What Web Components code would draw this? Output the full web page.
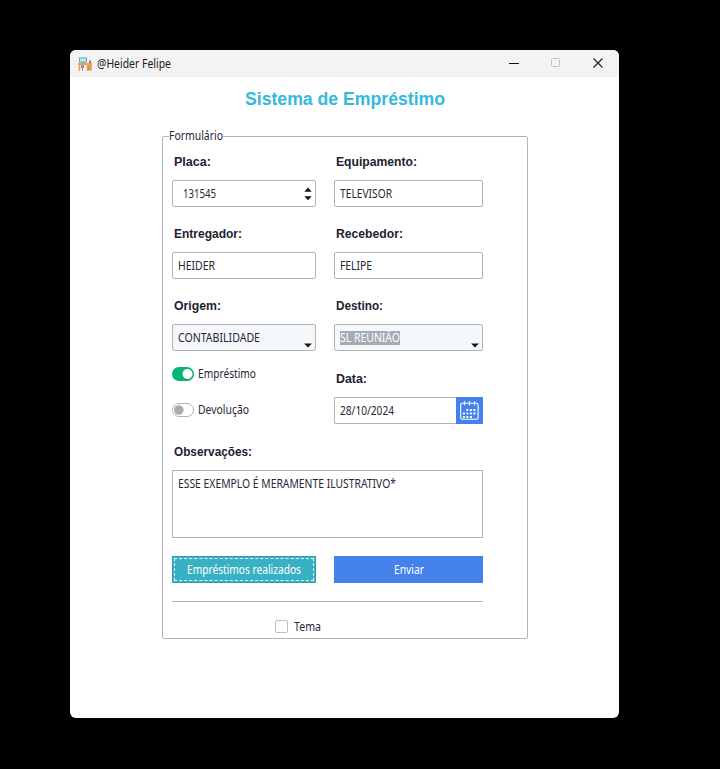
<!DOCTYPE html>
<html lang="pt-BR">
<head>
<meta charset="utf-8">
<title>Sistema de Empréstimo</title>
<style>
body{margin:0;background:#000;width:720px;height:769px;overflow:hidden;font:12px/16px "Noto Sans","Open Sans",sans-serif;color:#272735}
loan-window{margin:50px 0 0 70px}
</style>
</head>
<body>
<loan-window><span slot="heading">@Heider Felipe</span><loan-form></loan-form></loan-window>
<script>
function define(name, markup, ready) {
  const template = document.createElement('template');
  template.innerHTML = markup;
  customElements.define(name, class extends HTMLElement {
    connectedCallback() {
      if (this.shadowRoot) return;
      this.attachShadow({mode: 'open'}).append(template.content.cloneNode(true));
      if (ready) ready(this, this.shadowRoot);
    }
  });
}

// Text condensed or widened horizontally to a given advance width.
define('fit-text', `<style>
:host{display:inline-block;white-space:nowrap;flex:none}
span{display:inline-block;transform-origin:0 50%}
</style><span><slot></slot></span>`, (host, root) => {
  const span = root.querySelector('span');
  const width = +host.getAttribute('width');
  const natural = span.getBoundingClientRect().width;
  host.style.width = width + 'px';
  span.style.transform = `scaleX(${width / natural})`;
});

define('field-label', `<style>
:host{display:flex;align-items:center;height:36px;padding-left:2px;box-sizing:border-box;font:bold 13px/16px "Liberation Sans",Arial,sans-serif;color:#1c2230}
</style><slot></slot>`);

define('text-field', `<style>
:host{display:flex;align-items:center;box-sizing:border-box;height:27px;padding:0 6px;border:1px solid #b3b3b3;border-radius:2px;background:#fff;min-width:0}
:host([kind=spin]){padding:0 3px 0 10px}
:host([kind=combo]){background:#f5f8fb;padding-right:3px}
:host([kind=area]){height:68px;align-items:flex-start;padding-top:5px;border-radius:0}
:host([kind=date]){flex:1;border-right:0;border-radius:2px 0 0 2px}
svg{display:none;margin-left:auto;flex:none}
:host([kind=spin]) .spin,:host([kind=combo]) .combo{display:block}
.combo{align-self:flex-end;margin-bottom:2px}
</style><slot></slot>
<svg class="spin" width="8" height="16" viewBox="0 0 8 16"><path d="M.3 5.7 4 1.5l3.7 4.2zM.3 10.3 4 14.3l3.7-4z" fill="#151515"/></svg>
<svg class="combo" width="8" height="5" viewBox="0 0 8 5"><path d="M.1.5h7.8L4 4.5z" fill="#151515"/></svg>`);

define('toggle-switch', `<style>
:host{display:flex;align-items:center;gap:4px;height:16px}
svg{display:block;flex:none}
.on{display:none}:host([checked]) .on{display:block}:host([checked]) .off{display:none}
</style>
<svg width="22" height="14" viewBox="0 0 22 14"><g class="on"><rect width="22" height="14" rx="7" fill="#06b574"/><circle cx="15.5" cy="7" r="5" fill="#fff"/></g>
<g class="off"><rect x=".5" y=".5" width="21" height="13" rx="6.5" fill="#fff" stroke="#b3b3b3"/><circle cx="6.8" cy="7" r="4.8" fill="#acacac"/></g></svg><slot></slot>`);

define('push-button', `<style>
:host{display:flex;align-items:center;justify-content:center;box-sizing:border-box;height:27px;color:#fff;background:#4481eb}
:host([focused]){background:#3ab0c3;border:1px solid #2ca2b5}
:host([focused]) .ring{display:flex;align-items:center;justify-content:center;box-sizing:border-box;width:calc(100% - 2px);height:23px;border:1px dashed #e4f6f8}
</style><div class="ring"><slot></slot></div>`);

define('calendar-button', `<style>
:host{display:flex;align-items:center;justify-content:center;width:27px;height:27px;background:#4481eb}
</style><svg width="19" height="19" viewBox="0 0 19 19" fill="none" stroke="#fff"><rect x=".7" y="2.3" width="17.4" height="16" rx="1.6" stroke-width="1.1"/><path d="M4.5 .3v4M9.5 .3v4M14.5 .3v4" stroke-width="1.2"/><path d="M6.4 9h9.4M2.9 12.5h12.9M2.9 16h9" stroke-width="2" stroke-dasharray="2 1.5"/></svg>`);

define('theme-check', `<style>
:host{display:flex;align-items:center;gap:6px}
i{box-sizing:border-box;width:13px;height:13px;border:1px solid #bdbdbd;border-radius:2px;background:#fff;margin-bottom:1px}
</style><i></i><slot></slot>`);

define('loan-form', `<style>
:host{display:block;width:366px;margin-left:92px}
h1{height:44px;width:max-content;font:bold 18px/44px "Liberation Sans",Arial,sans-serif;color:#35b9dc;margin:0 0 0 83px}
fieldset{position:relative;margin:15px 0 0;box-sizing:border-box;width:366px;height:503px;border:1px solid #b3b3b3;border-radius:2px;padding:7px 44px 0 9px;min-width:0}
.legend{position:absolute;left:6px;top:-9px;background:#fff;height:16px}
.grid{display:grid;grid-template-columns:144px 149px;column-gap:18px;grid-template-rows:36px 27px 9px 36px 27px 9px 36px 27px 73px 10px 36px 68px 18px 27px}
.wide{grid-column:1/3}
.toggles{display:flex;flex-direction:column;gap:20px;padding-top:15px}
.data{padding-top:10px}.row{display:flex}
mark{display:flex;background:#a5acb5;color:#fff;height:14px;line-height:14px}
hr{height:1px;background:#b3b3b3;border:0;margin:18px 0 0}
theme-check{margin:17px 0 0 103px}
</style>
<h1><fit-text width="200">Sistema de Empréstimo</fit-text></h1>
<fieldset>
<div class="legend"><fit-text width="54">Formulário</fit-text></div>
<div class="grid">
<field-label><fit-text width="37">Placa:</fit-text></field-label><field-label><fit-text width="81">Equipamento:</fit-text></field-label>
<text-field kind="spin"><fit-text width="33">131545</fit-text></text-field><text-field style="padding-left:5px"><fit-text width="52">TELEVISOR</fit-text></text-field>
<div class="wide"></div>
<field-label><fit-text width="68">Entregador:</fit-text></field-label><field-label><fit-text width="67">Recebedor:</fit-text></field-label>
<text-field style="padding-left:5px"><fit-text width="37">HEIDER</fit-text></text-field><text-field style="padding-left:5px"><fit-text width="32">FELIPE</fit-text></text-field>
<div class="wide"></div>
<field-label><fit-text width="47">Origem:</fit-text></field-label><field-label><fit-text width="47">Destino:</fit-text></field-label>
<text-field kind="combo" style="padding-left:5px"><fit-text width="82">CONTABILIDADE</fit-text></text-field><text-field kind="combo" style="padding-left:5px"><mark><fit-text width="60">SL REUNIÃO</fit-text></mark></text-field>
<div class="toggles"><toggle-switch checked><fit-text width="58">Empréstimo</fit-text></toggle-switch><toggle-switch><fit-text width="51">Devolução</fit-text></toggle-switch></div>
<div class="data"><field-label><fit-text width="31">Data:</fit-text></field-label><div class="row"><text-field kind="date" style="padding-left:5px"><fit-text width="54">28/10/2024</fit-text></text-field><calendar-button></calendar-button></div></div>
<div class="wide"></div>
<field-label class="wide"><fit-text width="78">Observações:</fit-text></field-label>
<text-field class="wide" kind="area" style="padding-left:5px"><fit-text width="218">ESSE EXEMPLO É MERAMENTE ILUSTRATIVO*</fit-text></text-field>
<div class="wide"></div>
<push-button focused><fit-text width="114">Empréstimos realizados</fit-text></push-button><push-button><fit-text width="30">Enviar</fit-text></push-button>
</div>
<hr>
<theme-check><fit-text width="27">Tema</fit-text></theme-check>
</fieldset>`);

define('loan-window', `<style>
:host{display:block;box-sizing:border-box;width:549px;height:668px;background:#fff;border-radius:6px;overflow:hidden}
header{display:flex;align-items:center;height:27px;background:#f3f3f3;color:#191919;padding:0 15px 0 8px;box-sizing:border-box}
.name{margin-left:5px;height:16px}
.controls{display:flex;gap:30px;margin:0 0 1px auto}
svg{display:block}
</style>
<header>
<svg width="14" height="14" viewBox="0 0 14 14"><path d="M1 .5h8v5H1z" fill="#58a9c2"/><path d="M2 1.4h6v3H2z" fill="#bdebf5"/><path d="M3.5 5.5h3v1.3h-3z" fill="#66808a"/><path d="M0 6h14v2H0zM.7 8h1.5v6H.7z" fill="#dda255"/><path d="M8.5 7.5H14V14H8.5z" fill="#eab56a"/><path d="M9.5 9h3.3M9.5 11.5h3.3" stroke="#b1773c"/><path d="M3 8.2h3v2.5H3zM4 10h1v3.7H4z" fill="#98837a"/><path d="M11 3.5h2V6h-2z" fill="#bd6c50"/></svg>
<div class="name"><fit-text width="74"><slot name="heading"></slot></fit-text></div>
<div class="controls">
<svg width="12" height="12" viewBox="0 0 12 12" fill="none"><path d="M1 6.5h10" stroke="#111" stroke-width="1.2"/></svg>
<svg width="12" height="12" viewBox="0 0 12 12" fill="none"><rect x="1.5" y="1.5" width="8" height="8" rx="1" stroke="#c4c4c4"/></svg>
<svg width="12" height="12" viewBox="0 0 12 12" fill="none"><path d="m1.5 1.5 9 9m0-9-9 9" stroke="#222" stroke-width="1.2"/></svg>
</div>
</header>
<slot></slot>`);
</script>
</body>
</html>
